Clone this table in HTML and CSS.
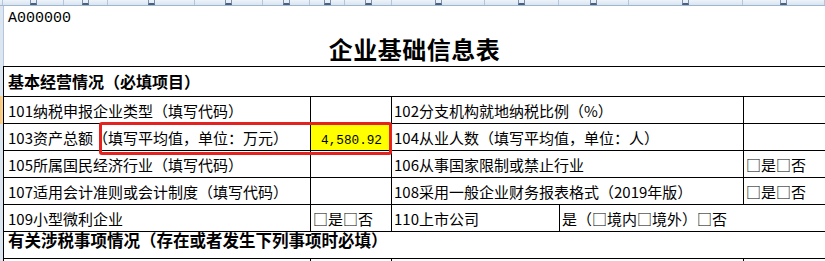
FILE: index.html
```html
<!DOCTYPE html>
<html lang="zh-CN">
<head>
<meta charset="utf-8">
<title>企业基础信息表</title>
<link rel="stylesheet" href="styles.css">
</head>
<body>
<div class="colhdr">
  <span class="corner"></span><span></span><span></span><span></span><span></span><span></span><span></span><span></span><span></span><span></span><span></span><span></span><span></span>
</div>
<div class="sheet">
  <div class="rowhdr">
    <div class="rh-a"></div>
    <div class="rh-sel"></div>
    <div class="rh-b"></div>
  </div>
  <div class="main">
    <div class="top">
      <div class="code">A000000</div>
      <div class="title">企业基础信息表</div>
    </div>
    <div class="sec sec1">基本经营情况（必填项目）</div>
    <div class="row">
      <div class="c first">101纳税申报企业类型（填写代码）</div>
      <div class="c"></div>
      <div class="c span2">102分支机构就地纳税比例（%）</div>
      <div class="c"></div>
    </div>
    <div class="row">
      <div class="c first">103资产总额（填写平均值，单位：万元）</div>
      <div class="c yel">4,580.92</div>
      <div class="c span2">104从业人数（填写平均值，单位：人）</div>
      <div class="c nob"></div>
    </div>
    <div class="row">
      <div class="c first">105所属国民经济行业（填写代码）</div>
      <div class="c"></div>
      <div class="c span2">106从事国家限制或禁止行业</div>
      <div class="c nob">□是□否</div>
    </div>
    <div class="row">
      <div class="c first">107适用会计准则或会计制度（填写代码）</div>
      <div class="c"></div>
      <div class="c span2">108采用一般企业财务报表格式（2019年版）</div>
      <div class="c nob">□是□否</div>
    </div>
    <div class="row">
      <div class="c first">109小型微利企业</div>
      <div class="c">□是□否</div>
      <div class="c">110上市公司</div>
      <div class="c span2 nob">是（□境内□境外）□否</div>
    </div>
    <div class="sec sec2">有关涉税事项情况（存在或者发生下列事项时必填）</div>
    <div class="row part">
      <div class="c first"></div>
      <div class="c"></div>
      <div class="c span2"></div>
      <div class="c nob"></div>
    </div>
    <div class="hl"></div>
  </div>
</div>
</body>
</html>
```
FILE: styles.css
```css
* { box-sizing: border-box; }
html, body { margin: 0; padding: 0; }
body {
  width: 825px;
  height: 261px;
  overflow: hidden;
  background: #fff;
  color: #000;
  font-family: "Noto Sans CJK SC", "Noto Sans", sans-serif;
  font-size: 15px;
}
.colhdr {
  display: grid;
  grid-template-columns: 3px 61px 44px 87px 68px 47px 35px 47px 93px 74px 70px 114px 82px;
  height: 6px;
  background: linear-gradient(#eef3fa, #dae4f0);
  border-bottom: 1px solid #9eb6ce;
  overflow: hidden;
}
.colhdr span {
  border-right: 1px solid #b3c6db;
  display: flex;
  justify-content: center;
  align-items: flex-start;
}
.colhdr span::after {
  content: "";
  width: 5px;
  height: 3px;
  border-bottom: 2px solid #4a6080;
  border-left: 1px solid #7c8fa8;
  border-right: 1px solid #7c8fa8;
}
.colhdr span.corner::after { display: none; }
.sheet {
  display: flex;
  height: 255px;
}
.rowhdr {
  width: 3px;
  display: flex;
  flex-direction: column;
  background: #dce6f1;
}
.rh-a { height: 90px; }
.rh-sel { height: 28px; background: linear-gradient(90deg, #f7c476, #fbd9a4); }
.rh-b { flex: 1; }
.main {
  width: 822px;
  position: relative;
}
.top {
  height: 60px;
  border-left: 1px solid #b3c6db;
  display: flex;
  flex-direction: column;
}
.code {
  height: 24px;
  padding: 4px 0 0 4px;
  font: 15px/17px "Liberation Mono", monospace;
}
.title {
  flex: 1;
  display: flex;
  align-items: center;
  justify-content: center;
  font-weight: 700;
  font-size: 24px;
  letter-spacing: 0.5px;
}
.sec {
  border-left: 1px solid #000;
  border-bottom: 1px solid #000;
  font-weight: 700;
  padding-left: 4px;
  display: flex;
  white-space: nowrap;
}
.sec1 {
  height: 31px;
  border-top: 1px solid #000;
  font-size: 16px;
  align-items: center;
  padding-bottom: 2px;
}
.sec2 {
  height: 27px;
  font-size: 16.5px;
  line-height: 17px;
  align-items: flex-start;
}
.row {
  display: grid;
  grid-template-columns: 307px 81px 168px 184px 82px;
  height: 27px;
  border-left: 1px solid #000;
  border-bottom: 1px solid #000;
}
.c {
  border-right: 1px solid #000;
  display: flex;
  align-items: center;
  padding-left: 2px;
  white-space: nowrap;
  overflow: hidden;
}
.c.first { padding-left: 4px; }
.c.span2 { grid-column: span 2; }
.c.nob { border-right: 0; }
.yel {
  background: #ffff00;
  justify-content: flex-end;
  align-items: flex-end;
  font: 12.7px/14px "Liberation Mono", monospace;
  padding-right: 9px;
  padding-bottom: 2px;
}
.part {
  height: 3px;
  border-bottom: 0;
}
.hl {
  position: absolute;
  left: 96px;
  top: 116px;
  width: 293px;
  height: 33px;
  border: 3px solid #e3231f;
  border-radius: 3px;
}
```
